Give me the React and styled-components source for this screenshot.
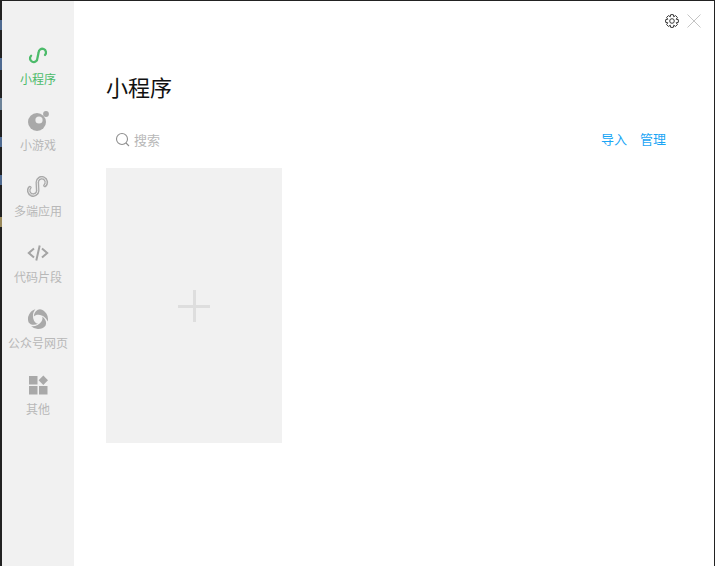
import React from "react";
import styled, { createGlobalStyle } from "styled-components";

const Global = createGlobalStyle`
  html, body { margin: 0; padding: 0; height: 100%; overflow: hidden; background: #fff; }
  * { box-sizing: border-box; }
  body { font-family: "Noto Sans CJK SC", "Noto Sans", sans-serif; }
`;

const Frame = styled.div`
  display: flex;
  width: 715px;
  height: 566px;
  border-top: 1px solid #222;
  border-right: 1px solid #222;
  background: #fff;
`;

// the desktop showing through at the window's left edge
const DesktopEdge = styled.div`
  flex: 0 0 2px;
  background: linear-gradient(
    to bottom,
    #222 19px, #4f6a90 19px, #4f6a90 29px,
    #222 29px, #222 57px, #4f6a90 57px, #4f6a90 69px,
    #222 69px, #222 97px, #6d8398 97px, #6d8398 109px,
    #222 109px, #222 136px, #4f6a90 136px, #4f6a90 146px,
    #222 146px, #222 174px, #4f6a90 174px, #4f6a90 184px,
    #222 184px, #222 216px, #98885a 216px, #98885a 226px,
    #222 226px
  );
`;

const Sidebar = styled.nav`
  flex: 0 0 72px;
  display: flex;
  flex-direction: column;
  padding-top: 43px;
  background: #f1f1f1;
`;

const NavItem = styled.div`
  height: 66px;
  display: flex;
  flex-direction: column;
  align-items: center;
  color: ${(p) => (p.$active ? "#4cbb6a" : "#b8b8b8")};
  font-size: 12px;
  line-height: 16px;
  white-space: nowrap;
`;

const NavIcon = styled.svg`
  width: 22px;
  height: 22px;
  margin-bottom: 5px;
  display: block;
`;

const Main = styled.main`
  flex: 1;
  display: flex;
  flex-direction: column;
  padding: 0 48px 0 32px;
`;

const TopBar = styled.div`
  display: flex;
  justify-content: flex-end;
  align-items: center;
  gap: 8px;
  height: 40px;
  margin-right: -35px;
`;

const Title = styled.h1`
  margin: 30px 0 0;
  font-size: 22px;
  line-height: 30px;
  font-weight: 400;
  color: #111;
`;

const SearchRow = styled.div`
  display: flex;
  align-items: center;
  justify-content: space-between;
  height: 26px;
  margin-top: 25px;
  padding-left: 9px;
`;

const Search = styled.div`
  display: flex;
  align-items: center;
  gap: 4px;
  color: #b8b8b8;
  font-size: 13px;
`;

const Actions = styled.div`
  display: flex;
  gap: 13px;
`;

const ActionLink = styled.a`
  color: #1aa5f5;
  font-size: 13px;
  line-height: 18px;
`;

const AddCard = styled.div`
  width: 176px;
  height: 275px;
  margin-top: 16px;
  display: flex;
  align-items: center;
  justify-content: center;
  background: #f1f1f1;
`;

const Plus = styled.div`
  position: relative;
  width: 32px;
  height: 32px;
  margin-top: 1px;
  &::before, &::after {
    content: "";
    position: absolute;
    background: #dedede;
  }
  &::before { left: 0; right: 0; top: 14.5px; height: 3px; }
  &::after { top: 0; bottom: 0; left: 14.5px; width: 3px; }
`;

function MiniIcon() {
  return (
    <NavIcon viewBox="0 0 22 22" fill="none" stroke="#4cbb6a" strokeWidth="2.300" strokeLinecap="round">
      <path d="M4.100 11.700A3.700 3.700 0 1 0 10.400 14.300L11.600 8.400A3.700 3.700 0 1 1 18 11" />
    </NavIcon>
  );
}

function GameIcon() {
  return (
    <NavIcon viewBox="0 0 22 22">
      <circle cx="10" cy="12" r="9" fill="#a9a9a9" />
      <circle cx="12" cy="10" r="3.600" fill="#eeeeee" />
      <circle cx="19" cy="4" r="2.900" fill="#a9a9a9" />
    </NavIcon>
  );
}

const MULTI_LOOP = "M2.800 11.600A4.500 4.500 0 1 0 10.700 14.800L10.300 6.200A4.500 4.500 0 1 1 18 9.400";

function MultiIcon() {
  return (
    <NavIcon viewBox="0 0 22 22" fill="none" strokeLinecap="round">
      <path d={MULTI_LOOP} stroke="#a9a9a9" strokeWidth="3.600" />
      <path d={MULTI_LOOP} stroke="#f1f1f1" strokeWidth="0.900" />
    </NavIcon>
  );
}

function CodeIcon() {
  return (
    <NavIcon viewBox="0 0 22 22" fill="none" stroke="#a4a4a4" strokeWidth="2">
      <path d="M7 6.500 1.800 11 7 15.500M15 6.500l5.200 4.500L15 15.500M12.700 3.500 9.300 18.500" />
    </NavIcon>
  );
}

const BLADE = "M6.800 8.600C7.200 4 10 1.400 13 1.200A10 10 0 0 1 20.660 13.600C19.500 10 16 7 11.500 6.700C9.700 6.600 8 7.200 6.800 8.600z";

function OfficialIcon() {
  return (
    <NavIcon viewBox="0 0 22 22" fill="#a9a9a9">
      <path d={BLADE} />
      <path d={BLADE} transform="rotate(120 11 11)" />
      <path d={BLADE} transform="rotate(240 11 11)" />
    </NavIcon>
  );
}

function OtherIcon() {
  return (
    <NavIcon viewBox="0 0 22 22" fill="#a9a9a9">
      <rect x="2" y="2" width="8.500" height="8.500" />
      <rect x="2" y="12" width="8.500" height="8.500" />
      <rect x="12" y="12" width="8.500" height="8.500" />
      <path d="M16.300 1.500 21 6.200l-4.700 4.700-4.700-4.700z" />
    </NavIcon>
  );
}

function SearchIcon() {
  return (
    <svg width="15" height="15" viewBox="0 0 15 15" fill="none" stroke="#8f8f8f" strokeWidth="1.100">
      <circle cx="7" cy="7" r="5.500" />
      <path d="m11 11 3 3" />
    </svg>
  );
}

// eight teeth, corners worked out from the angle
const gearPoints = Array.from({ length: 8 }).flatMap((_, i) => {
  const a = (i * Math.PI) / 4;
  return [
    [a - 0.4, 4.6],
    [a - 0.2, 6.5],
    [a + 0.2, 6.5],
    [a + 0.4, 4.6],
  ].map(([t, r]) => `${(7 + r * Math.sin(t)).toFixed(2)},${(7 - r * Math.cos(t)).toFixed(2)}`);
}).join(" ");

function GearIcon() {
  return (
    <svg width="14" height="14" viewBox="0 0 14 14" fill="none" stroke="#222" strokeWidth="0.900">
      <polygon points={gearPoints} />
      <circle cx="7" cy="7" r="2.300" />
    </svg>
  );
}

function CloseIcon() {
  return (
    <svg width="14" height="14" viewBox="0 0 14 14" fill="none" stroke="#c4c4c4" strokeWidth="1">
      <path d="m.5.500 13 13M13.500.500l-13 13" />
    </svg>
  );
}

const navItems = [
  { label: "小程序", Icon: MiniIcon, active: true },
  { label: "小游戏", Icon: GameIcon },
  { label: "多端应用", Icon: MultiIcon },
  { label: "代码片段", Icon: CodeIcon },
  { label: "公众号网页", Icon: OfficialIcon },
  { label: "其他", Icon: OtherIcon },
];

export default function App() {
  return (
    <>
      <Global />
      <Frame>
        <DesktopEdge />
        <Sidebar>
          {navItems.map(({ label, Icon, active }) => (
            <NavItem key={label} $active={active}>
              <Icon />
              {label}
            </NavItem>
          ))}
        </Sidebar>
        <Main>
          <TopBar>
            <GearIcon />
            <CloseIcon />
          </TopBar>
          <Title>小程序</Title>
          <SearchRow>
            <Search>
              <SearchIcon />
              搜索
            </Search>
            <Actions>
              <ActionLink>导入</ActionLink>
              <ActionLink>管理</ActionLink>
            </Actions>
          </SearchRow>
          <AddCard>
            <Plus />
          </AddCard>
        </Main>
      </Frame>
    </>
  );
}
